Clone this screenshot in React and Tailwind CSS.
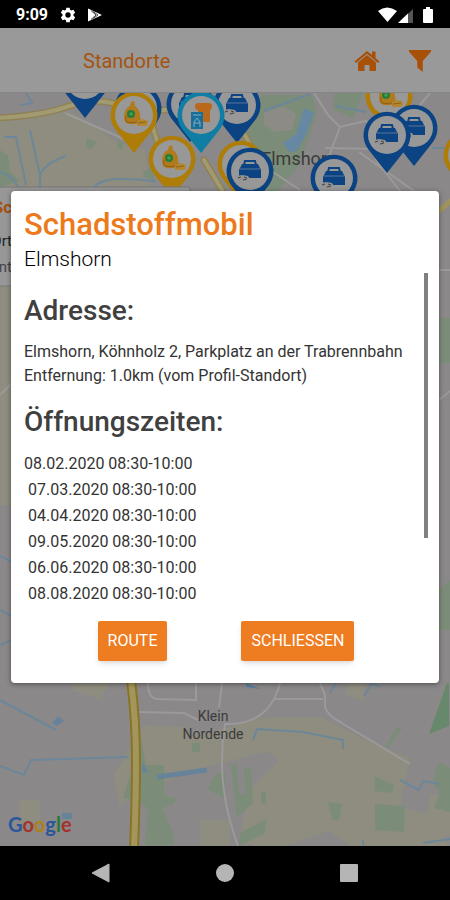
import React from "react";

const openingTimes = [
  "08.02.2020 08:30-10:00",
  "07.03.2020 08:30-10:00",
  "04.04.2020 08:30-10:00",
  "09.05.2020 08:30-10:00",
  "06.06.2020 08:30-10:00",
  "08.08.2020 08:30-10:00",
];

const pinColors = { blue: "#0b4383", gold: "#ad7d08", cyan: "#107da5" };

const pins = [
  { x: 85, y: 80, color: "blue", icon: "box" },
  { x: 138, y: 108, color: "blue", icon: "box" },
  { x: 134, y: 115, color: "gold", icon: "bag" },
  { x: 190, y: 104, color: "blue", icon: "box" },
  { x: 237, y: 105, color: "blue", icon: "box" },
  { x: 201, y: 115, color: "cyan", icon: "shirt" },
  { x: 172, y: 159, color: "gold", icon: "bag" },
  { x: 241, y: 164, color: "gold", icon: "bag" },
  { x: 250, y: 171, color: "blue", icon: "box" },
  { x: 334, y: 178, color: "blue", icon: "box" },
  { x: 389, y: 96, color: "gold", icon: "bag" },
  { x: 414, y: 128, color: "blue", icon: "box" },
  { x: 387, y: 135, color: "blue", icon: "box" },
  { x: 467, y: 155, color: "gold", icon: "bag" },
];

function PinIcon({ icon }) {
  if (icon === "box") {
    return (
      <g>
        <path d="M-6 -6l1-4h10l1 4" fill="none" stroke="#0b4383" strokeWidth="2" />
        <path d="M-8 -7h16l3 6v8h-22v-8z" fill="#0b4383" />
        <path d="M-10 -2h20" stroke="#5b7697" strokeWidth="1" />
        <path d="M-13 5l5-1 6 1 2 3-7 2-6-2z" fill="#939393" />
        <path d="M-12 7l3-1M-7 9l4-1M-6 6l3 1" stroke="#444" strokeWidth="1" />
      </g>
    );
  }
  if (icon === "bag") {
    return (
      <g>
        <path d="M-3 -13l3-1 1 5q5 4 5 9l1 7q-8 4-15 1q-2-2-2-8q1-7 6-9z" fill="#b07a1e" />
        <path d="M-8 1q-1 5 1 6 7 2 13-1" fill="none" stroke="#8f5f12" strokeWidth="1" />
        <circle cx="-3" cy="-1" r="4" fill="#257d38" />
        <path d="M-5 -1l2-2 2 2-2 2z" fill="#4f9a58" />
        <path d="M3 6l6-2 5 2-1 5-10 0z" fill="#b4862f" />
        <path d="M4 8l8-1" stroke="#8e6113" strokeWidth="1" />
      </g>
    );
  }
  return (
    <g>
      <path d="M-6-9q0-3 4-3h9q4 0 4 3 0 3-2 4v12h-12v-12q-3 0-3-4z" fill="#b9681c" />
      <path d="M-10-3h12v17h-12z" fill="#176f9b" />
      <path d="M-8 0h8M-7 12v-5l3-4 3 4v5M-7 8h6" stroke="#8caabb" strokeWidth="1" fill="none" />
    </g>
  );
}

function Pin({ x, y, color, icon }) {
  return (
    <g transform={`translate(${x} ${y})`}>
      <path d="M0 38L-19 14A23.5 23.5 0 1 1 19 14Z" fill={pinColors[color]} />
      <circle r="19" fill="#989898" />
      <PinIcon icon={icon} />
    </g>
  );
}

function MapCanvas() {
  return (
    <svg
      className="absolute inset-0 h-full w-full"
      viewBox="0 93 450 753"
      preserveAspectRatio="xMidYMid slice"
      role="img"
      aria-label="Karte"
    >
      <rect y="93" width="450" height="753" fill="#8b8889" />
      {/* fields */}
      <g fill="#8f8d7f">
        <path d="M0 118L70 111 100 130 124 148 118 190 0 190z" />
        <path d="M110 140l35 10 5 40h-40z" />
        <path d="M0 285h12v220H0z" />
        <path d="M72 683h38l-10 16-26-8z" />
        <path d="M144 725l40 2 10 10 70-20 56 0 60 30 30 10-10 50 40 10 9 34h-90l-30-20-60 20-30-10 10-50 30-30-10-10-80 20-70 34-5-30z" />
        <path d="M350 683h16l-3 18-18-6zM200 820h30v26h-30z" />
        <path d="M430 795h20v40h-25z" />
        <path d="M20 800h20v22H20z" />
      </g>
      {/* parks and woods */}
      <g fill="#7b8d78">
        <path d="M0 150l8 6 2 16 10 9-20 6z" />
        <path d="M87 138l9 4-5 8-5-3zM118 140l6 3-3 7-4-3zM143 172l9-4 2 12-10-3z" />
        <path d="M262 95h50l5 17-8 25-11 30-20 24h-22v-35l-20-5 10-20 3-20z" />
        <path d="M335 93h28l-10 26-20-10z" />
        <path d="M439 318h11v45h-11zM439 590l11-10v50h-11z" />
        <path d="M140 735l6 30 18 0v30l12 3-2 6-12 4 12 26v11h-29l3-36-8-8-17-3 8-26 5-3z" />
        <path d="M192 743h8v9h-8zM217 773h8v26l-18-10z" />
        <path d="M231 764h6l2 30h7l-2-27h7l2 37-16 12zM261 792h5v12h-5zM240 833l26-14-1 14-26 13z" />
        <path d="M328 802l14 2-3 17-7-1zM374 776l20 9-2 8-17-2zM375 804l30 2-1 26-29-2z" />
        <path d="M403 727l-14 20-4 0 12-20zM438 762l12 6v44l-16-4 6-16-7-10z" />
      </g>
      <path d="M449 683v43l-20 8 18-51z" fill="#68886c" />
      {/* a tan clearing inside the park */}
      <path d="M264 112l20-6 12 8-4 16-18 2-10-8z" fill="#8d8b85" />
      {/* water */}
      <path d="M304 108l10 5-7 20-10 18-8 1-6-9 13-9z" fill="#6788a3" />
      <path d="M144 764l4 8-6 1v-9zM58 716l6 5-7 5-5-3zM62 813h10v6h-10z" fill="#67839a" />
      <path d="M157 777l50-7" stroke="#67839a" strokeWidth="5" />
      <g fill="none" stroke="#6b8799" strokeWidth="2">
        <path d="M4 137h12l10 48M30 130l10 45v15M40 174q7-12 26-18M0 172q12 3 20 18M92 189q8-10 27-10t36 2M20 105l12-2-6-10" />
        <path d="M264 111l46-17M336 106l30 6M432 148h18" />
        <path d="M0 700l56 30M0 766l24 9 7-15 98-3M253 740l4-11 46 3 40 8v9M400 780l19 10 4-9 17 3M330 693l6-10M364 696l8-13 8 4M423 843l27-4M363 846v-6" />
        <path d="M0 556l12 6M0 610l12 6M0 645l12-5" />
      </g>
      <path d="M245 683l16 6-14-2z" fill="#4f7fa3" />
      {/* streets */}
      <g fill="none" stroke="#9b999a" strokeWidth="2">
        <path d="M314 93l14 22 12 12 25-6 25 8M340 127l-15 40M325 148l50 1M359 152l55 39M300 190l-30-20M65 113l50 22 20 10" />
        <path d="M400 191l-25-32M430 93l-15 18" />
        <path d="M136 712l48 1 14 7M148 683q0 16 10 16l38 1v-17M222 683l-3 25M280 683q-10 40-50 41l-5 0q-10 60 13 122M275 699h48M320 683l5 12 0 12q2 8 15 15l70 42" />
        <path d="M439 400l11-9M439 270h11M0 395l12-12" />
      </g>
      <g fill="none" strokeLinecap="round">
        <path d="M-5 118Q40 116 66 107T112 103L150 118 172 190M158 110h20M245 135l15 30M204 160l18 30" stroke="#8f8156" strokeWidth="7" />
        <path d="M-5 118Q40 116 66 107T112 103L150 118 172 190M158 110h20M245 135l15 30M204 160l18 30" stroke="#a29a70" strokeWidth="4" />
        <path d="M439 211l15-13" stroke="#a0935c" strokeWidth="5" />
        <path d="M131 680Q136 720 136 760T134 850" stroke="#8a7428" strokeWidth="10" />
        <path d="M131 680Q136 720 136 760T134 850" stroke="#a3965c" strokeWidth="6" />
      </g>
      <g className="font-['Roboto',sans-serif]" fill="#3b3b3b">
        <text x="261" y="165" fontSize="18">Elmshorn</text>
        <text x="213" y="721" fontSize="14" textAnchor="middle">Klein</text>
        <text x="213" y="739" fontSize="14" textAnchor="middle">Nordende</text>
      </g>
      {pins.map((p, i) => (
        <Pin key={i} {...p} />
      ))}
      {/* info window of the selected location */}
      <rect x="-10" y="187" width="200" height="99" rx="2" fill="#979797" stroke="#777" />
      <g className="font-['Roboto',sans-serif]" textAnchor="end">
        <text x="12" y="213" fontSize="17" fontWeight="700" fill="#a5500f">Sc</text>
        <text x="12" y="246" fontSize="15" fill="#222">Ort</text>
        <text x="12" y="272" fontSize="15" fill="#444">Ent</text>
      </g>
      <text x="8" y="832" fontSize="20" fontWeight="700" className="font-['Lato',sans-serif]">
        <tspan fill="#2a569c">G</tspan>
        <tspan fill="#a3332b">o</tspan>
        <tspan fill="#ae8312">o</tspan>
        <tspan fill="#2a569c">g</tspan>
        <tspan fill="#28793e">l</tspan>
        <tspan fill="#a3332b">e</tspan>
      </text>
    </svg>
  );
}

function StatusBar() {
  return (
    <div className="flex h-7 shrink-0 items-center bg-black pt-0.5 pr-4 pl-4 text-white">
      <span className="text-base font-bold">9:09</span>
      <svg className="ml-3 size-4" viewBox="0 0 24 24" fill="white" aria-hidden="true">
        <path
          fillRule="evenodd"
          d="M9.500 1h5l.6 3.200 2 1.200 3.100-1.100 2.500 4.300-2.500 2.200v2.400l2.500 2.200-2.500 4.300-3.100-1.100-2 1.200-.6 3.200h-5l-.6-3.200-2-1.200-3.100 1.100-2.500-4.300 2.500-2.200v-2.400L1.300 8.600l2.500-4.300 3.100 1.100 2-1.200zM12 8a4 4 0 1 0 0 8 4 4 0 0 0 0-8z"
        />
      </svg>
      <svg className="ml-3 size-4" viewBox="0 0 16 16" aria-hidden="true">
        <path d="M0 1.500L14 8 0 14.500z" fill="white" />
        <path d="M3 3.500l5 4.500-5 4.500M5 4.500l5 3.500M5 11.500l5-3.500" stroke="#444" strokeWidth="1" fill="none" />
      </svg>
      <svg className="ml-auto h-4 w-14" viewBox="0 0 56 16" aria-hidden="true">
        <path d="M0 4Q9-3 19 4L9.500 15z" fill="white" />
        <path d="M20 16L35 2v14z" fill="#555" />
        <path d="M20 16L30 6.500V16z" fill="white" />
        <path d="M45 3q0-1 1-1h2V0h4v2h2q1 0 1 1v12q0 1-1 1h-8q-1 0-1-1z" fill="white" />
      </svg>
    </div>
  );
}

function Header() {
  return (
    <header className="flex h-[65px] shrink-0 items-center border-b border-[#858585] bg-[#999] pt-0.5 pr-[19px] pl-20 text-[#a5540f]">
      <h1 className="pl-[3px] text-xl">Standorte</h1>
      <button type="button" aria-label="Startseite" className="ml-auto">
        <svg className="h-6 w-7" viewBox="0 0 28 24" fill="#a84f08" aria-hidden="true">
          <path d="M14 6l9 7.500V21q0 1-1 1h-5.500v-6h-5v6H6q-1 0-1-1v-7.500z" />
          <path d="M1.500 12.500L14 2l5 4V2.500h3.500v6.500l4 3.500-1.500 1.500L14 4.700 3 14z" />
        </svg>
      </button>
      <button type="button" aria-label="Filter" className="ml-7">
        <svg className="size-[22px]" viewBox="0 0 24 24" fill="#a84f08" aria-hidden="true">
          <path d="M0 0h24v2l-9 10v12l-6-5v-7L0 2z" />
        </svg>
      </button>
    </header>
  );
}

function LocationDialog() {
  return (
    <div
      role="dialog"
      aria-modal="true"
      aria-labelledby="dialog-title"
      className="w-full rounded bg-white pt-4 pr-[11px] pb-[22px] pl-[13px] shadow-[0_1px_5px_rgba(0,0,0,0.45)]"
    >
      <h2 id="dialog-title" className="text-[31px] leading-9 font-medium text-[#ec7a1c]">
        Schadstoffmobil
      </h2>
      <p className="mt-0.5 text-[21px] leading-7 font-light text-black">Elmshorn</p>
      <div className="flex h-[332px]">
        <div className="min-w-0 flex-1 overflow-hidden pt-5 text-base leading-6 text-[#333]">
          <h3 className="text-[28px] leading-9 font-medium text-[#404040]">Adresse:</h3>
          <p className="pt-[11px]">
            Elmshorn, Köhnholz 2, Parkplatz an der Trabrennbahn
            <br />
            Entfernung: 1.0km (vom Profil-Standort)
          </p>
          <h3 className="pt-4 text-[28px] leading-9 font-medium text-[#404040]">Öffnungszeiten:</h3>
          <ul className="pt-[11px] leading-[26px]">
            {openingTimes.map((time) => (
              <li key={time} className="pl-1 first:pl-0">
                {time}
              </li>
            ))}
          </ul>
        </div>
        <div className="h-[265px] w-1 shrink-0 bg-[#808080]" />
      </div>
      <div className="flex justify-center gap-[74px] pt-4">
        <button
          type="button"
          className="h-10 rounded-xs bg-[#ee7c20] px-2.5 text-base text-white shadow-md"
        >
          ROUTE
        </button>
        <button
          type="button"
          className="h-10 rounded-xs bg-[#ee7c20] px-2.5 text-base text-white shadow-md"
        >
          SCHLIESSEN
        </button>
      </div>
    </div>
  );
}

function NavBar() {
  return (
    <nav className="flex h-[54px] shrink-0 items-center justify-center gap-[100px] bg-black">
      <button type="button" aria-label="Zurück">
        <svg className="size-6" viewBox="0 0 24 24" fill="#b5b5b5" aria-hidden="true">
          <path d="M20 3v18L3 12z" strokeLinejoin="round" stroke="#b5b5b5" />
        </svg>
      </button>
      <button type="button" aria-label="Home">
        <svg className="size-6" viewBox="0 0 24 24" fill="#b5b5b5" aria-hidden="true">
          <circle cx="12" cy="12" r="9" />
        </svg>
      </button>
      <button type="button" aria-label="Übersicht">
        <svg className="size-6" viewBox="0 0 24 24" fill="#b5b5b5" aria-hidden="true">
          <rect x="3" y="3" width="18" height="18" rx="1" />
        </svg>
      </button>
    </nav>
  );
}

export default function App() {
  return (
    <div className="flex h-screen flex-col overflow-hidden bg-black font-['Roboto',sans-serif]">
      <StatusBar />
      <div className="relative flex flex-1 flex-col">
        <Header />
        <main className="relative flex-1 overflow-hidden">
          <MapCanvas />
        </main>
        <div className="absolute inset-0 flex items-center justify-center px-[11px]">
          <LocationDialog />
        </div>
      </div>
      <NavBar />
    </div>
  );
}
